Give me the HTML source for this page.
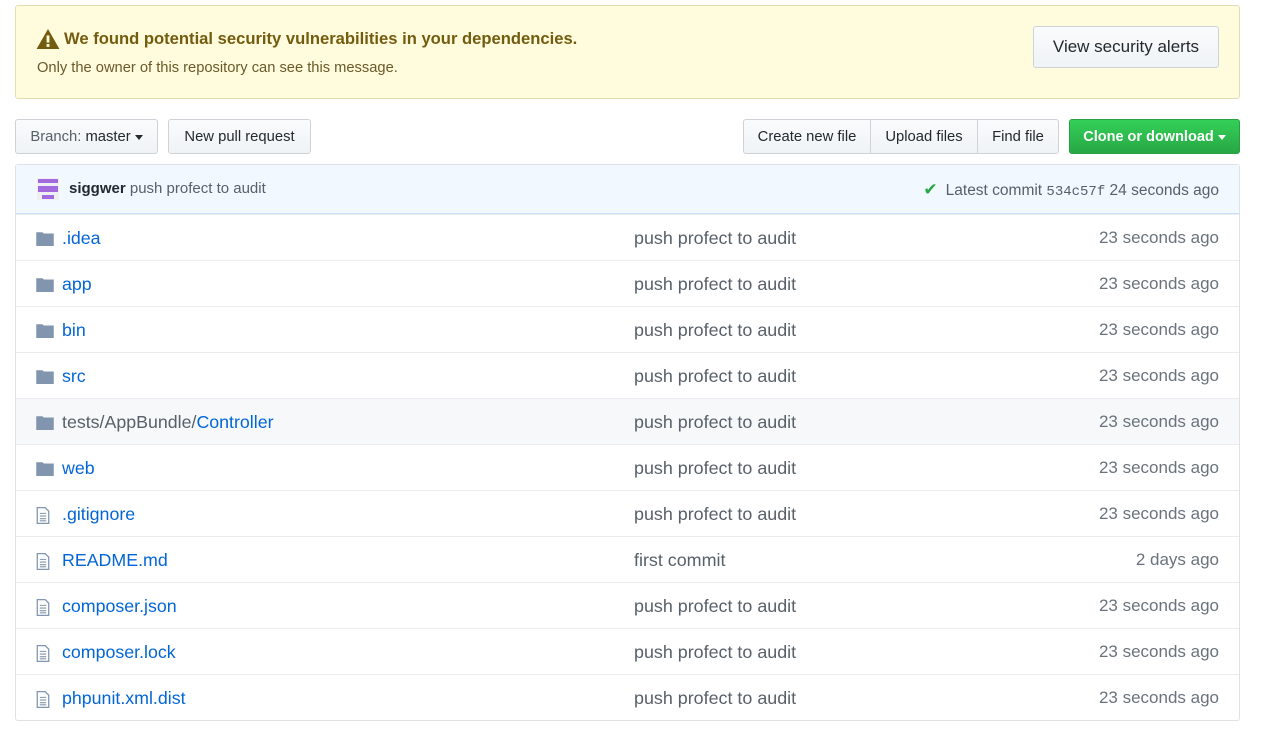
<!DOCTYPE html><html><head><style>
body{margin:0;background:#fff;font-family:"Liberation Sans",sans-serif;width:1262px;height:732px;overflow:hidden;position:relative}
.ban{position:absolute;left:15px;top:5px;width:1223px;height:92px;background:#fffbdd;border:1px solid #e4dbb0;border-radius:3px}
.ban h3{position:absolute;left:20px;top:23px;margin:0;font-size:16.6px;color:#735c0f;font-weight:bold;display:flex;align-items:center}
.ban p{position:absolute;left:21px;top:54px;margin:0;font-size:14.7px;color:#6a5a2a}
.btn{position:absolute;box-sizing:border-box;height:35px;border:1px solid #cfd3d7;border-radius:3px;background:linear-gradient(#fafbfc,#eff3f6);font-size:14.8px;color:#24292e;display:flex;align-items:center;justify-content:center}
.car{display:inline-block;border-top:5px solid currentColor;border-left:4px solid transparent;border-right:4px solid transparent;margin-left:4px;margin-top:2px}
.box{position:absolute;left:15px;top:164px;width:1223px;height:555px;border:1px solid #dfe2e5;border-radius:3px}
.cb{height:48px;background:#f1f8ff;border-bottom:1px solid #c8e1ff;position:relative;font-size:15px;color:#586069}
.row{height:45px;border-top:1px solid #eaecef;position:relative;font-size:17px}
.row:first-of-type{border-top:none}
.row .n{position:absolute;left:46px;top:13px;color:#0366d6;font-size:17.8px}
.row .m{position:absolute;left:618px;top:13px;color:#586069;font-size:17.9px}
.row .a{position:absolute;right:20px;top:13px;color:#6a737d}
.row svg{position:absolute;left:20px;top:16px}
</style></head><body>
<div class="ban"><h3><svg width="24" height="20" viewBox="0 0 16 14" style="margin-right:4px"><path fill="#735c0f" d="M8 0L16 14H0z"/><rect x="7" y="4.5" width="2" height="5" fill="#fffbdd"/><rect x="7" y="10.5" width="2" height="2" fill="#fffbdd"/></svg>We found potential security vulnerabilities in your dependencies.</h3>
<p>Only the owner of this repository can see this message.</p>
<div class="btn" style="left:1017px;top:20px;width:186px;height:42px;font-size:17px">View security alerts</div></div>
<div class="btn" style="left:15px;top:119px;width:143px"><span style="color:#586069">Branch:&nbsp;</span><span>master</span><span class="car"></span></div>
<div class="btn" style="left:168px;top:119px;width:143px">New pull request</div>
<div class="btn" style="left:743px;top:119px;width:128px;border-radius:3px 0 0 3px">Create new file</div>
<div class="btn" style="left:870px;top:119px;width:108px;border-radius:0">Upload files</div>
<div class="btn" style="left:977px;top:119px;width:82px;border-radius:0 3px 3px 0">Find file</div>
<div class="btn" style="left:1069px;top:119px;width:171px;background:linear-gradient(#34d058,#28a745);border-color:#279f43;color:#fff;font-weight:bold;font-size:14.5px">Clone or download<span class="car"></span></div>
<div class="box">
<div class="cb"><svg width="22" height="22" viewBox="0 0 22 22" style="position:absolute;left:21px;top:13px"><rect width="22" height="22" fill="#f0eef5"/><rect x="1" y="1" width="20" height="4" fill="#a36ae0"/><rect x="1" y="8" width="20" height="6" fill="#a36ae0"/><rect x="5" y="17" width="12" height="4" fill="#a36ae0"/></svg>
<span style="position:absolute;left:53px;top:15px"><b style="color:#24292e">siggwer</b> push profect to audit</span>
<span style="position:absolute;right:20px;top:15px;font-size:15.5px"><span style="color:#28a745;font-size:17px;margin-right:8px">✔</span>Latest commit <span style="font-family:'Liberation Mono',monospace;font-size:14px">534c57f</span> 24 seconds ago</span></div>
</div>
<script>
var rows=[['.idea',1,'push profect to audit','23 seconds ago'],['app',1],['bin',1],['src',1],['tests/AppBundle/Controller',1],['web',1],['.gitignore',0],['README.md',0,'first commit','2 days ago'],['composer.json',0],['composer.lock',0],['phpunit.xml.dist',0]];
var b=document.querySelector('.box'),h='';
rows.forEach(function(r,i){var ic=r[1]?'<svg width="18" height="15" viewBox="0 0 14 12"><path d="M0 1h5l1 1h8v10H0z" style="fill:#8196ae"/></svg>':'<svg width="14" height="17" viewBox="0 0 12 16"><path fill="none" stroke="#8196ae" stroke-width="1.2" d="M.6.6h7.5l3.3 3.3v11.5H.6z"/><path stroke="#8196ae" d="M3 6h6M3 8.5h6M3 11h6M3 13h6"/></svg>';
var n=r[0];if(i==4)n='<span style="color:#586069">tests/AppBundle/</span>Controller';
h+='<div class="row"'+(i==4?' style="background:#f6f8fa"':'')+'>'+ic+'<span class="n">'+n+'</span><span class="m">'+(r[2]||'push profect to audit')+'</span><span class="a">'+(r[3]||'23 seconds ago')+'</span></div>';});
b.innerHTML+=h;
</script>
</body></html>
